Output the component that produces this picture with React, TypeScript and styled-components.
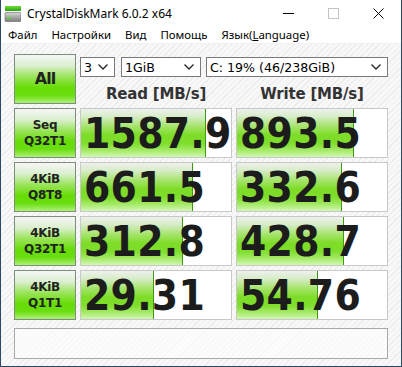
import React from 'react';
import styled, { createGlobalStyle } from 'styled-components';

const GlobalStyle = createGlobalStyle`
  html, body {
    margin: 0;
    padding: 0;
    background: #ffffff;
  }
  * {
    box-sizing: border-box;
  }
`;

// Window chrome
const Window = styled.div`
  width: 402px;
  height: 367px;
  display: flex;
  flex-direction: column;
  border: 1px solid #2b4866;
  border-top: none;
  background: #ffffff;
  font-family: 'Noto Sans', 'DejaVu Sans', sans-serif;
  overflow: hidden;
`;

const TitleBar = styled.div`
  height: 26px;
  display: flex;
  align-items: center;
  padding-left: 3px;
  background: #ffffff;
`;

const Title = styled.div`
  margin-left: 6px;
  font-size: 12px;
  color: #000000;
  flex: 1;
`;

const WindowControls = styled.div`
  display: flex;
  align-items: center;
  height: 100%;
`;

const ControlButton = styled.div`
  width: 45px;
  height: 100%;
  display: flex;
  align-items: center;
  justify-content: center;
`;

const MenuBar = styled.div`
  height: 18px;
  display: flex;
  align-items: center;
  border-bottom: 1px solid #f0f0f0;
  background: #ffffff;
`;

const MenuItem = styled.span`
  padding: 0 7px;
  font-size: 11.4px;
  color: #000000;
  line-height: 18px;

  u {
    text-decoration: underline;
  }
`;

// Client area
const Client = styled.div`
  flex: 1;
  padding: 10px 13px 0 13px;
  background-color: #f7f7f7;
  background-image: repeating-linear-gradient(
    135deg,
    #f8f8f8 0px,
    #f8f8f8 3px,
    #ececec 3px,
    #ececec 4px
  );
`;

const Board = styled.div`
  display: grid;
  grid-template-columns: 62px 152px 152px;
  grid-auto-rows: 50px;
  column-gap: 4px;
  row-gap: 4px;
`;

const GreenButton = styled.div<{ $big?: boolean }>`
  display: flex;
  align-items: center;
  justify-content: center;
  text-align: center;
  border: 1px solid #7c8f7c;
  background: linear-gradient(
    to bottom,
    #f6f6f6 0%,
    #dcf0d0 22%,
    #9be45c 45%,
    #66dc06 68%,
    #6ade10 84%,
    #aef077 100%
  );
  font-family: 'DejaVu Sans', Verdana, sans-serif;
  font-weight: bold;
  color: #222222;
  font-size: ${({ $big }) => ($big ? '16px' : '12px')};
  letter-spacing: ${({ $big }) => ($big ? '-1px' : '-0.3px')};
  line-height: ${({ $big }) => ($big ? '1' : '16px')};
`;

const HeaderArea = styled.div`
  grid-column: 2 / span 2;
  display: flex;
  flex-direction: column;
`;

const SelectRow = styled.div`
  display: flex;
  margin-top: 3px;
  height: 20px;
`;

const FakeSelect = styled.div<{ $w: number; $gap: number }>`
  width: ${({ $w }) => $w}px;
  margin-left: ${({ $gap }) => $gap}px;
  height: 20px;
  display: flex;
  align-items: center;
  justify-content: space-between;
  padding: 0 6px 0 3px;
  border: 1px solid #7a7a7a;
  background: #ffffff;
  font-family: 'DejaVu Sans', Verdana, sans-serif;
  font-size: 12.6px;
  color: #000000;
  white-space: nowrap;
`;

const HeaderRow = styled.div`
  flex: 1;
  display: grid;
  grid-template-columns: 152px 152px;
  column-gap: 4px;
  align-items: center;
`;

const ColumnTitle = styled.div`
  text-align: center;
  font-family: 'DejaVu Sans', Verdana, sans-serif;
  font-weight: bold;
  font-size: 15px;
  color: #333333;
  letter-spacing: -0.2px;
  padding-top: 7px;
`;

const ValueBox = styled.div`
  position: relative;
  border: 1px solid #c8c8c8;
  background: #ffffff;
  overflow: hidden;
`;

const Bar = styled.div`
  position: absolute;
  left: 0;
  top: 0;
  bottom: 0;
  border-right: 1px solid #3c9a10;
  background: linear-gradient(
    to bottom,
    #eef1ec 0%,
    #d6ecc8 16%,
    #a6e46c 36%,
    #7cdc26 55%,
    #80de2c 72%,
    #a4ea66 86%,
    #d2f7b4 100%
  );
`;

const Value = styled.div`
  position: relative;
  height: 100%;
  display: flex;
  align-items: center;
  padding-left: 3px;
  font-family: 'DejaVu Sans Condensed', 'DejaVu Sans', Verdana, sans-serif;
  font-weight: bold;
  font-size: 42px;
  letter-spacing: 0.3px;
  color: #1c1c1c;
  white-space: nowrap;
`;

const StatusBox = styled.div`
  margin-top: 8px;
  height: 31px;
  border: 1px solid #a8a8a8;
  background: rgba(255, 255, 255, 0.6);
`;

const Chevron = () => (
  <svg width="10" height="6" viewBox="0 0 10 6">
    <polyline points="0.5,0.5 5,5 9.5,0.5" fill="none" stroke="#222" strokeWidth="1.3" />
  </svg>
);

const AppIcon = () => (
  <svg width="17" height="17" viewBox="0 0 17 17">
    <defs>
      <linearGradient id="gbar" x1="0" y1="0" x2="0" y2="1">
        <stop offset="0" stopColor="#6fe03a" />
        <stop offset="1" stopColor="#26a212" />
      </linearGradient>
      <linearGradient id="gbox" x1="0" y1="0" x2="0" y2="1">
        <stop offset="0" stopColor="#d8d8d8" />
        <stop offset="1" stopColor="#7c7c7c" />
      </linearGradient>
    </defs>
    <rect x="1" y="1" width="16" height="5" fill="url(#gbar)" />
    <rect x="1" y="7.5" width="16" height="9" rx="1" fill="url(#gbox)" stroke="#666" strokeWidth="0.6" />
    <rect x="3" y="12" width="4" height="2" fill="#5bd43a" />
  </svg>
);

interface Row {
  label: string[];
  read: string;
  readFill: number;
  write: string;
  writeFill: number;
}

const rows: Row[] = [
  { label: ['Seq', 'Q32T1'], read: '1587.9', readFill: 125, write: '893.5', writeFill: 117 },
  { label: ['4KiB', 'Q8T8'], read: '661.5', readFill: 112, write: '332.6', writeFill: 105 },
  { label: ['4KiB', 'Q32T1'], read: '312.8', readFill: 102, write: '428.7', writeFill: 107 },
  { label: ['4KiB', 'Q1T1'], read: '29.31', readFill: 73, write: '54.76', writeFill: 81 },
];

const App: React.FC = () => {
  return (
    <>
      <GlobalStyle />
      <Window>
        <TitleBar>
          <AppIcon />
          <Title>CrystalDiskMark 6.0.2 x64</Title>
          <WindowControls>
            <ControlButton>
              <svg width="11" height="11" viewBox="0 0 11 11">
                <line x1="0" y1="5.5" x2="11" y2="5.5" stroke="#000" strokeWidth="1" />
              </svg>
            </ControlButton>
            <ControlButton>
              <svg width="11" height="11" viewBox="0 0 11 11">
                <rect x="0.5" y="0.5" width="10" height="10" fill="none" stroke="#c4c4c4" strokeWidth="1" />
              </svg>
            </ControlButton>
            <ControlButton>
              <svg width="11" height="11" viewBox="0 0 11 11">
                <line x1="0.5" y1="0.5" x2="10.5" y2="10.5" stroke="#000" strokeWidth="1" />
                <line x1="10.5" y1="0.5" x2="0.5" y2="10.5" stroke="#000" strokeWidth="1" />
              </svg>
            </ControlButton>
          </WindowControls>
        </TitleBar>

        <MenuBar>
          <MenuItem>Файл</MenuItem>
          <MenuItem>Настройки</MenuItem>
          <MenuItem>Вид</MenuItem>
          <MenuItem>Помощь</MenuItem>
          <MenuItem>
            Язык(<u>L</u>anguage)
          </MenuItem>
        </MenuBar>

        <Client>
          <Board>
            <GreenButton $big>All</GreenButton>
            <HeaderArea>
              <SelectRow>
                <FakeSelect $w={35} $gap={0}>
                  3<Chevron />
                </FakeSelect>
                <FakeSelect $w={80} $gap={6}>
                  1GiB<Chevron />
                </FakeSelect>
                <FakeSelect $w={182} $gap={5}>
                  C: 19% (46/238GiB)<Chevron />
                </FakeSelect>
              </SelectRow>
              <HeaderRow>
                <ColumnTitle>Read [MB/s]</ColumnTitle>
                <ColumnTitle>Write [MB/s]</ColumnTitle>
              </HeaderRow>
            </HeaderArea>

            {rows.map((r) => (
              <React.Fragment key={r.label.join('-')}>
                <GreenButton>
                  {r.label[0]}
                  <br />
                  {r.label[1]}
                </GreenButton>
                <ValueBox>
                  <Bar style={{ width: r.readFill }} />
                  <Value>{r.read}</Value>
                </ValueBox>
                <ValueBox>
                  <Bar style={{ width: r.writeFill }} />
                  <Value>{r.write}</Value>
                </ValueBox>
              </React.Fragment>
            ))}
          </Board>
          <StatusBox />
        </Client>
      </Window>
    </>
  );
};

export default App;
